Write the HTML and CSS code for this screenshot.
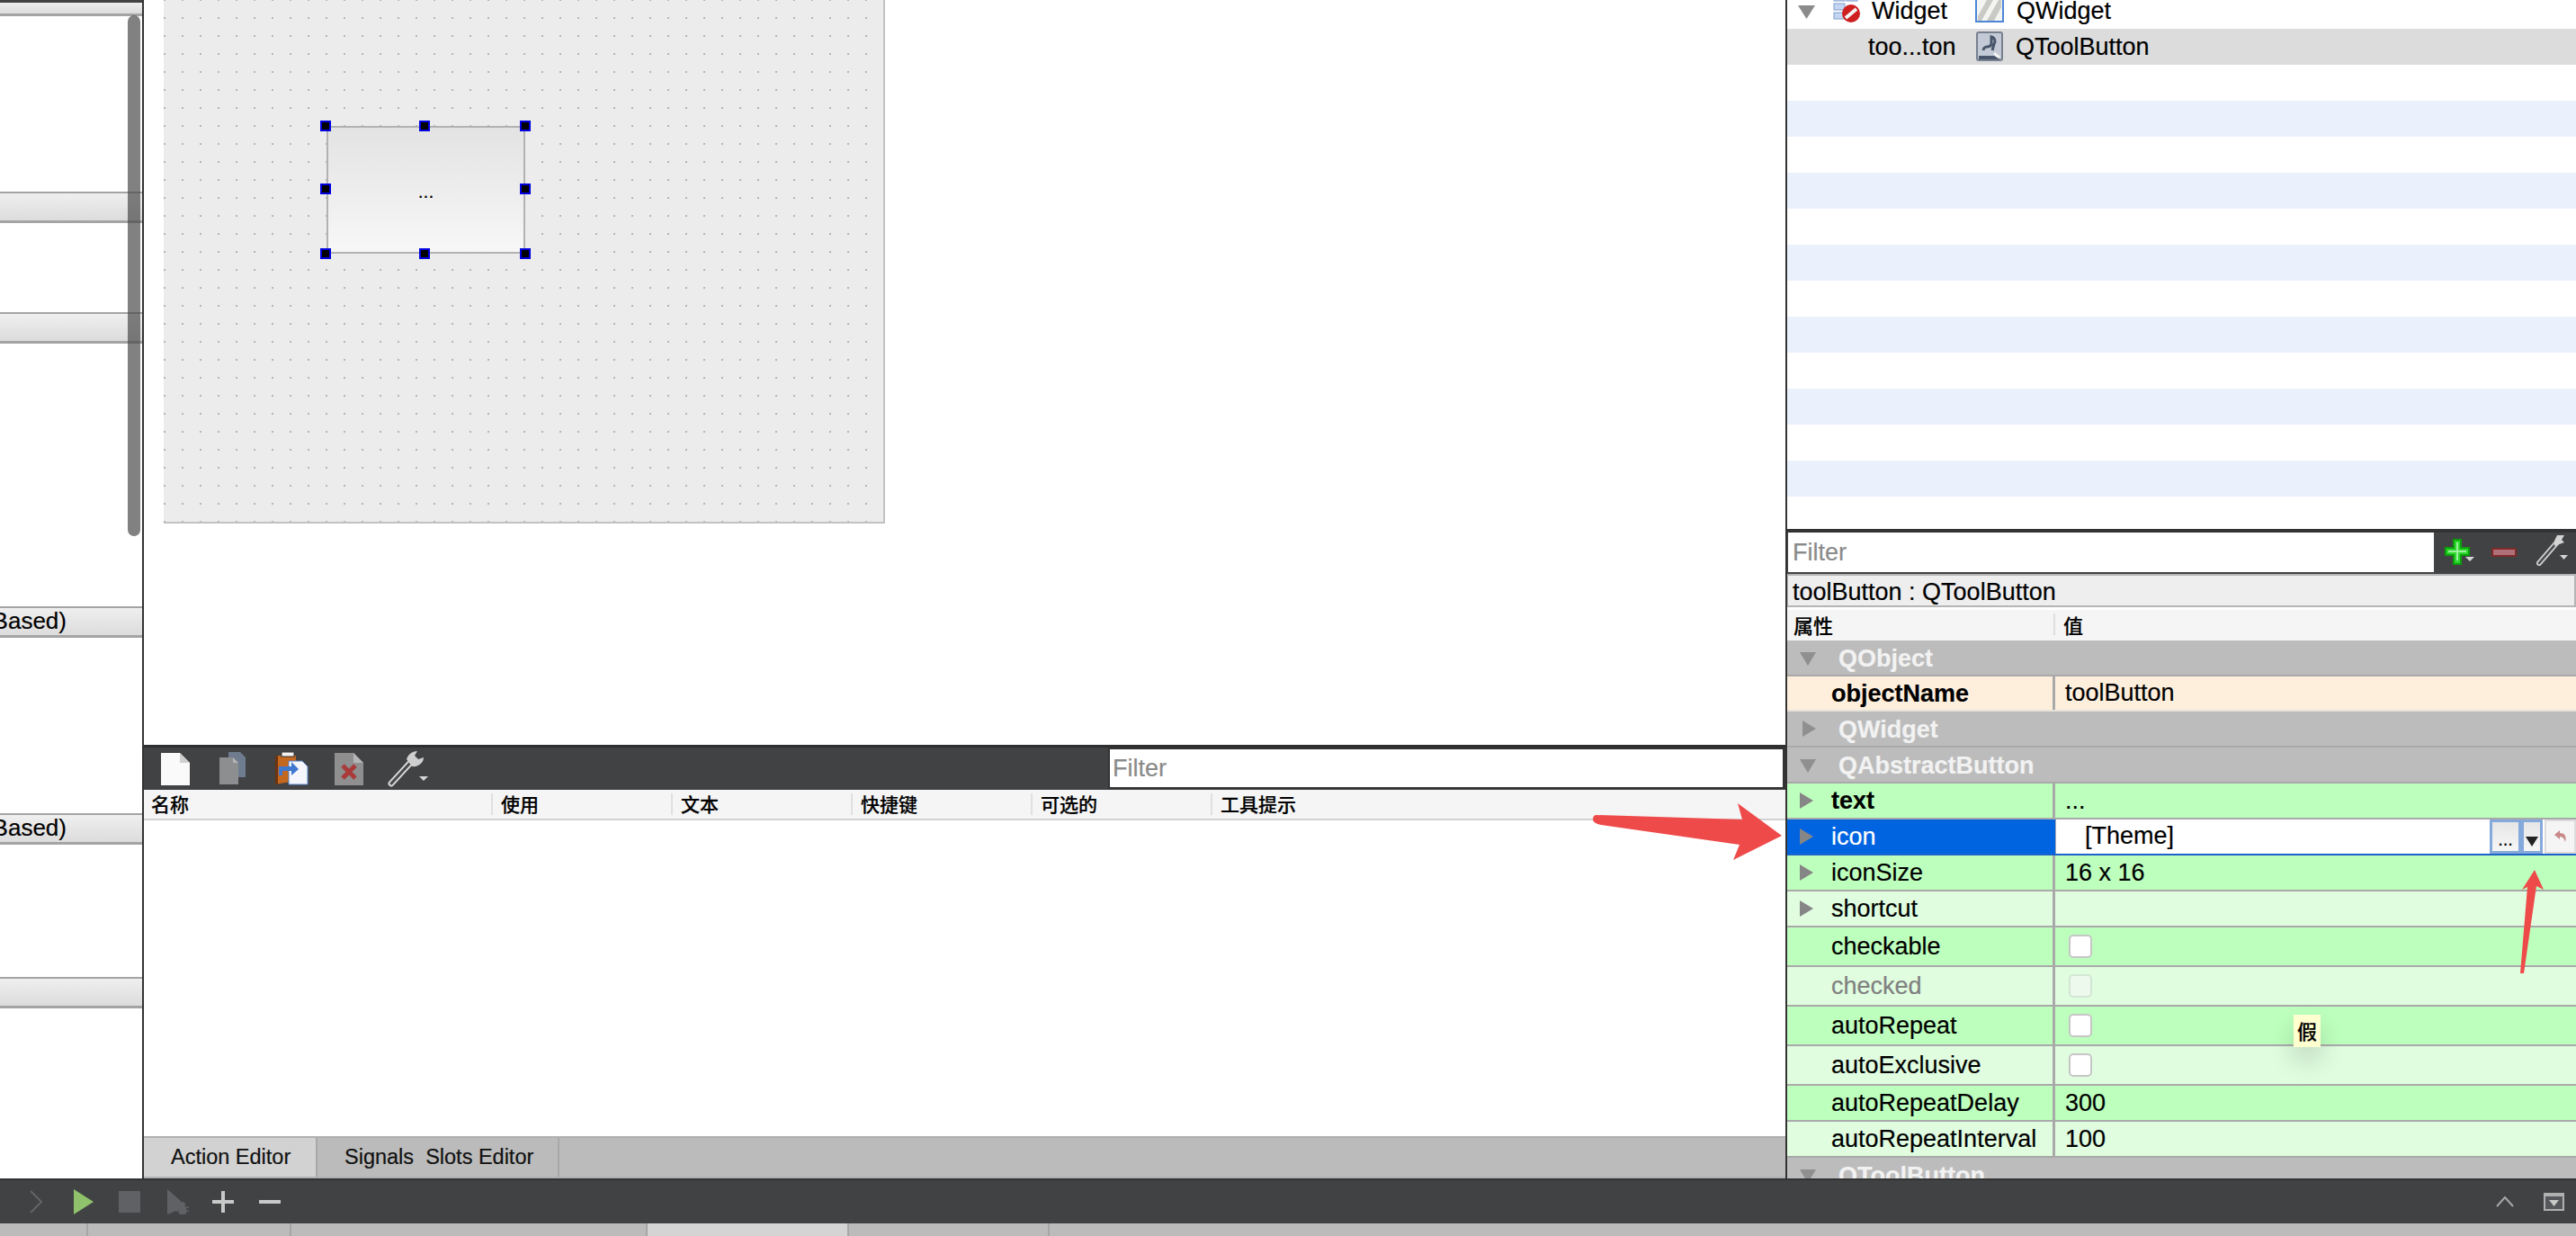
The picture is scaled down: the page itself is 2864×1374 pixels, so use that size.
FILE: index.html
```html
<!DOCTYPE html>
<html lang="en">

<head>
  <meta charset="UTF-8">
  <meta name="viewport" content="width=device-width, initial-scale=1.0">
  <title>Qt Designer</title>
  <link rel="stylesheet" href="styles.css">
</head>

<body>
  <div class="app">
    <div class="main">
      <!-- widget box, only the right end is visible -->
      <aside class="widget-box">
        <div class="box-head first"></div>
        <div class="box-body h-195"></div>
        <div class="box-head"></div>
        <div class="box-body h-99"></div>
        <div class="box-head"></div>
        <div class="box-body h-292"></div>
        <div class="box-head"><span class="clip">Based)</span></div>
        <div class="box-body h-195"></div>
        <div class="box-head"><span class="clip">Based)</span></div>
        <div class="box-body h-147"></div>
        <div class="box-head"></div>
        <div class="scroll-thumb"></div>
      </aside>

      <section class="center">
        <div class="canvas-area">
          <div class="form">
            <div class="tool-button">...</div>
            <i class="handle h-tl"></i><i class="handle h-tc"></i><i class="handle h-tr"></i>
            <i class="handle h-ml"></i><i class="handle h-mr"></i>
            <i class="handle h-bl"></i><i class="handle h-bc"></i><i class="handle h-br"></i>
          </div>
        </div>

        <div class="action-editor">
          <div class="dark-bar">
            <div class="bar-icons">
              <svg class="ic" width="32" height="36" viewBox="0 0 32 36">
                <path d="M0 0H21L32 11V36H0Z" fill="#fafafa" />
                <path d="M21 0L32 11H21Z" fill="#cfcfcf" />
              </svg>
              <svg class="ic" width="32" height="38" viewBox="0 0 32 38">
                <path d="M11 0H24L30 6V28H11Z" fill="#6f7c90" />
                <path d="M1 6H16L22 12V36H1Z" fill="#8d8e90" />
                <path d="M16 6L22 12H16Z" fill="#b4b4b4" />
              </svg>
              <svg class="ic" width="38" height="38" viewBox="0 0 38 38">
                <path d="M0 4H23V32L0 36Z" fill="#c4671f" />
                <path d="M0 4H3V36H0Z" fill="#6b3410" />
                <rect x="7" y="0" width="14" height="5" fill="#f2f2f2" stroke="#333" />
                <path d="M15 10H30L36 16V36H15Z" fill="#f4f6fb" stroke="#5a86cc" />
                <path d="M4 16H18V11L26 19L18 26V21H8V26H4Z" fill="#3f78cf" />
              </svg>
              <svg class="ic" width="32" height="36" viewBox="0 0 32 36">
                <path d="M0 0H21L32 11V36H0Z" fill="#8f8f8f" />
                <path d="M21 0L32 11H21Z" fill="#b5b5b5" />
                <path d="M9 14L23 28M23 14L9 28" stroke="#a83a3a" stroke-width="5" />
              </svg>
              <svg class="ic" width="46" height="40" viewBox="0 0 46 40">
                <path d="M4 36L26 12" stroke="#d8d8d8" stroke-width="7" stroke-linecap="round" />
                <path d="M4 36L26 12" stroke="#48494b" stroke-width="3" stroke-linecap="round" />
                <path d="M21 9C23 3 28 0 33 0L30 5L34 9L40 7C40 13 34 18 27 17Z" fill="#cfcfcf" />
                <path d="M35 28H45L40 33Z" fill="#d5d5d5" />
              </svg>
            </div>
            <div class="bar-filter">Filter</div>
          </div>
          <div class="action-head">
            <div class="col">名称</div>
            <div class="col">使用</div>
            <div class="col">文本</div>
            <div class="col">快捷键</div>
            <div class="col">可选的</div>
            <div class="col">工具提示</div>
          </div>
          <div class="action-body"></div>
          <div class="tabs">
            <div class="tab active">Action Editor</div>
            <div class="tab">Signals &nbsp;Slots Editor</div>
          </div>
        </div>
      </section>

      <section class="side">
        <div class="object-tree">
          <div class="obj-row top">
            <svg class="tree-arrow" width="19" height="15" viewBox="0 0 19 15"><path d="M0 0H19L9.500 15Z" fill="#8b8b8b" /></svg>
            <svg class="obj-icon w-icon" width="30" height="28" viewBox="0 0 30 28">
              <rect x="1" y="-4" width="12" height="7" fill="#c5d6f2" stroke="#7f9dcc" />
              <rect x="15" y="-4" width="12" height="7" fill="#c5d6f2" stroke="#7f9dcc" />
              <rect x="1" y="6" width="12" height="7" fill="#c5d6f2" stroke="#7f9dcc" />
              <rect x="1" y="16" width="12" height="7" fill="#c5d6f2" stroke="#7f9dcc" />
              <circle cx="20" cy="17" r="10" fill="#cf2020" />
              <path d="M14 22L26 12" stroke="#f4f4f4" stroke-width="4" />
            </svg>
            <span class="obj-name n-widget">Widget</span>
            <svg class="obj-icon" width="32" height="25" viewBox="0 0 32 25">
              <rect x="1" y="-2" width="30" height="26" fill="#f4f4f2" stroke="#4d86d8" stroke-width="2" />
              <path d="M3 18L13 0H20L7 23H3ZM13 23L26 0H29V8L21 23Z" fill="#c9c9c6" />
            </svg>
            <span>QWidget</span>
          </div>
          <div class="obj-row selected">
            <span class="obj-name n-tool">too...ton</span>
            <svg class="obj-icon" width="30" height="34" viewBox="0 0 30 34">
              <rect x="1" y="1" width="28" height="31" rx="2" fill="#c3cad5" stroke="#76808f" stroke-width="2" />
              <path d="M8 21C9 14 15 20 17 14L17 6C21 7 22 11 20 14L18 21" fill="none" stroke="#48556a" stroke-width="3" />
              <path d="M3 27H20L27 31H3Z" fill="#48556a" />
              <path d="M20 24L26 29" stroke="#f2f2f2" stroke-width="3" />
            </svg>
            <span>QToolButton</span>
          </div>
          <div class="obj-row"></div>
          <div class="obj-row alt"></div>
          <div class="obj-row"></div>
          <div class="obj-row alt"></div>
          <div class="obj-row"></div>
          <div class="obj-row alt"></div>
          <div class="obj-row"></div>
          <div class="obj-row alt"></div>
          <div class="obj-row"></div>
          <div class="obj-row alt"></div>
          <div class="obj-row"></div>
          <div class="obj-row alt"></div>
          <div class="obj-row last"></div>
        </div>

        <div class="prop-filter">
          <div class="filter-input">Filter</div>
          <div class="filter-icons">
            <svg width="34" height="30" viewBox="0 0 34 30">
              <path d="M10 1H18V10H27V18H18V28H10V18H1V10H10Z" fill="#2fd82f" stroke="#0aa00a" stroke-width="2" />
              <path d="M14 4V24M4 14H24" stroke="#9df09d" stroke-width="2" />
              <path d="M23 20H33L28 25Z" fill="#d5d5d5" />
            </svg>
            <svg width="28" height="10" viewBox="0 0 28 10">
              <rect x="1" y="1" width="26" height="8" fill="#b07078" stroke="#7e2a2a" stroke-width="2" />
            </svg>
            <svg class="filter-wrench" width="36" height="34" viewBox="0 0 36 34">
              <path d="M3 31L22 9" stroke="#cfcfcf" stroke-width="6" stroke-linecap="round" />
              <path d="M3 31L22 9" stroke="#48494b" stroke-width="2.500" stroke-linecap="round" />
              <path d="M20 6L23 0H31L28 5L31 8L20 12Z" fill="#d4d4d4" />
              <path d="M26 22H35L30.500 27Z" fill="#d5d5d5" />
            </svg>
          </div>
        </div>
        <div class="class-label">toolButton : QToolButton</div>
        <div class="prop-head">
          <div class="prop-head-name">属性</div>
          <div class="prop-head-value">值</div>
        </div>

        <div class="props">
          <div class="group"><i class="tri down"></i>QObject</div>
          <div class="prop cream">
            <div class="p-name bold">objectName</div>
            <div class="p-value">toolButton</div>
          </div>
          <div class="group"><i class="tri right"></i>QWidget</div>
          <div class="group"><i class="tri down"></i>QAbstractButton</div>
          <div class="prop green">
            <div class="p-name bold"><i class="tri right dark"></i>text</div>
            <div class="p-value">...</div>
          </div>
          <div class="prop current">
            <div class="p-name"><i class="tri right dark"></i>icon</div>
            <div class="p-value editor">
              <span class="theme">[Theme]</span>
              <span class="ed-btn b-more">...</span>
              <span class="ed-btn b-drop"><i class="drop-tri"></i></span>
              <span class="ed-reset">
                <svg width="14" height="14" viewBox="0 0 14 14">
                  <path d="M0 5L6 0V3C11 3 14 6 12 13C11 9 9 7 6 7V10Z" fill="#c98a8a" />
                </svg>
              </span>
            </div>
          </div>
          <div class="prop green">
            <div class="p-name"><i class="tri right dark"></i>iconSize</div>
            <div class="p-value">16 x 16</div>
          </div>
          <div class="prop pale">
            <div class="p-name"><i class="tri right dark"></i>shortcut</div>
            <div class="p-value"></div>
          </div>
          <div class="prop green tall">
            <div class="p-name">checkable</div>
            <div class="p-value"><i class="check"></i></div>
          </div>
          <div class="prop pale tall">
            <div class="p-name muted">checked</div>
            <div class="p-value"><i class="check off"></i></div>
          </div>
          <div class="prop green tall">
            <div class="p-name">autoRepeat</div>
            <div class="p-value"><i class="check"></i></div>
          </div>
          <div class="prop pale tall">
            <div class="p-name">autoExclusive</div>
            <div class="p-value"><i class="check"></i></div>
          </div>
          <div class="prop green">
            <div class="p-name">autoRepeatDelay</div>
            <div class="p-value">300</div>
          </div>
          <div class="prop pale">
            <div class="p-name">autoRepeatInterval</div>
            <div class="p-value">100</div>
          </div>
          <div class="group"><i class="tri down"></i>QToolButton</div>
          <div class="tooltip">假</div>
        </div>
      </section>
    </div>

    <div class="run-bar">
      <div class="run-icons">
        <svg width="14" height="26" viewBox="0 0 14 26"><path d="M1 1L13 13L1 25" fill="none" stroke="#626467" stroke-width="2" /></svg>
        <svg width="22" height="28" viewBox="0 0 22 28"><path d="M0 0L22 14L0 28Z" fill="#8fc26b" /></svg>
        <div class="stop"></div>
        <svg width="24" height="28" viewBox="0 0 24 28">
          <path d="M0 0L15 13V22L0 28Z" fill="#606165" />
          <circle cx="17" cy="17" r="3" fill="#606165" />
          <rect x="13" y="19" width="8" height="9" rx="2" fill="#606165" />
          <path d="M10 20H24M10 24H24" stroke="#606165" stroke-width="1.500" />
        </svg>
        <svg width="24" height="24" viewBox="0 0 24 24"><path d="M10 0H14V10H24V14H14V24H10V14H0V10H10Z" fill="#c9c9c9" /></svg>
        <svg width="24" height="4" viewBox="0 0 24 4"><rect width="24" height="4" fill="#c9c9c9" /></svg>
      </div>
      <div class="run-right">
        <svg width="20" height="12" viewBox="0 0 20 12"><path d="M1 11L10 1L19 11" fill="none" stroke="#a8a8a8" stroke-width="2" /></svg>
        <svg width="23" height="20" viewBox="0 0 23 20">
          <rect x="1" y="1" width="21" height="18" fill="#55575a" stroke="#b0b0b0" stroke-width="2" />
          <rect x="0" y="0" width="23" height="4" fill="#b0b0b0" />
          <path d="M6 8H17L11.500 15Z" fill="#c9c9c9" />
        </svg>
      </div>
    </div>

    <div class="status-tabs">
      <div class="st w-97"></div>
      <div class="st w-226"></div>
      <div class="st w-396"></div>
      <div class="st w-224 on"></div>
      <div class="st w-223"></div>
      <div class="st"></div>
    </div>
  </div>

  <!-- red marks drawn on top of the screenshot -->
  <svg class="marks" width="2864" height="1374" viewBox="0 0 2864 1374">
    <path d="M1775 906L1937 911L1932 893L1981 929L1927 956L1934 939L1780 917Q1771 915 1771 911Q1771 906 1775 906Z" fill="#ef4a4a" />
    <path d="M2818 967L2828 989L2820 985L2806 1082L2802 1082L2810 986L2804 989Z" fill="#ef4a4a" />
  </svg>
</body>

</html>
```

FILE: styles.css
```css
* {
  margin: 0;
  padding: 0;
  box-sizing: border-box;
}

html {
  height: 1374px;
  overflow: hidden;
}

body {
  width: 2864px;
  height: 1374px;
  overflow: hidden;
  position: relative;
  background: #fff;
  font-family: 'Liberation Sans', 'Noto Sans CJK SC', sans-serif;
  font-size: 27px;
  color: #000;
  -webkit-text-stroke: 0.2px currentColor;
}

.app {
  width: 2864px;
  height: 1374px;
  display: flex;
  flex-direction: column;
}

.main {
  height: 1310px;
  display: flex;
}

/* left panel */
.widget-box {
  width: 160px;
  position: relative;
  border-right: 2px solid #333;
  overflow: hidden;
}

.box-head {
  height: 35px;
  background: linear-gradient(#efefef, #dcdcdc);
  border-top: 2px solid #a4a4a4;
  border-bottom: 3px solid #a4a4a4;
  overflow: hidden;
  position: relative;
}

.box-head.first {
  height: 18px;
  border-top: 3px solid #444;
}

.box-body {
  background: #fff;
}

.h-195 {
  height: 195px;
}

.h-99 {
  height: 99px;
}

.h-292 {
  height: 292px;
}

.h-147 {
  height: 147px;
}

.clip {
  position: absolute;
  right: 84px;
  top: 1px;
  line-height: 26px;
  font-size: 26px;
}

.scroll-thumb {
  position: absolute;
  left: 142px;
  top: 17px;
  width: 14px;
  height: 579px;
  border-radius: 7px;
  background: rgba(70, 70, 70, 0.68);
}

/* middle */
.center {
  width: 1825px;
  display: flex;
  flex-direction: column;
}

.canvas-area {
  height: 828px;
  padding-left: 22px;
}

.form {
  width: 802px;
  height: 582px;
  position: relative;
  background-color: #ececec;
  background-image: radial-gradient(circle at 1px 1px, #b6b6b6 0.8px, transparent 1.1px);
  background-size: 20px 20px;
  background-position: 0 19px;
  border-right: 2px solid #c2c2c2;
  border-bottom: 2px solid #c2c2c2;
}

.tool-button {
  position: absolute;
  left: 181px;
  top: 140px;
  width: 221px;
  height: 142px;
  border: 2px solid #b2b2b2;
  background: linear-gradient(#e3e3e3, #f7f7f7);
  display: flex;
  align-items: center;
  justify-content: center;
  font-size: 21px;
  padding-top: 3px;
}

.handle {
  position: absolute;
  width: 12px;
  height: 12px;
  background: #000;
  border: 2px solid #0000e0;
}

.h-tl {
  left: 174px;
  top: 134px;
}

.h-tc {
  left: 284px;
  top: 134px;
}

.h-tr {
  left: 396px;
  top: 134px;
}

.h-ml {
  left: 174px;
  top: 204px;
}

.h-mr {
  left: 396px;
  top: 204px;
}

.h-bl {
  left: 174px;
  top: 276px;
}

.h-bc {
  left: 284px;
  top: 276px;
}

.h-br {
  left: 396px;
  top: 276px;
}

.action-editor {
  flex: 1;
  display: flex;
  flex-direction: column;
}

.dark-bar {
  height: 50px;
  background: #414244;
  border-top: 3px solid #2f2f30;
  display: flex;
  justify-content: space-between;
}

.bar-icons {
  display: flex;
  align-items: center;
  padding-left: 19px;
}

.bar-icons .ic:nth-child(2) {
  margin-left: 32px;
}

.bar-icons .ic:nth-child(3) {
  margin-left: 31px;
}

.bar-icons .ic:nth-child(4) {
  margin-left: 28px;
}

.bar-icons .ic:nth-child(5) {
  margin-left: 27px;
}

.bar-filter {
  width: 753px;
  height: 46px;
  background: #fff;
  border: 2px solid #333;
  border-right-width: 3px;
  color: #8a8a8a;
  padding-left: 3px;
  line-height: 42px;
}

.action-head {
  height: 34px;
  display: flex;
  background: #f5f5f5;
  border-bottom: 2px solid #d2d2d2;
  font-family: 'Noto Sans CJK SC', sans-serif;
  font-size: 21px;
  font-weight: 500;
  line-height: 30px;
}

.col {
  width: 200px;
  padding-left: 10px;
  position: relative;
}

.col:first-child {
  width: 387px;
  padding-left: 8px;
}

.col:last-child {
  width: auto;
  flex: 1;
}

.col + .col::before {
  content: '';
  position: absolute;
  left: -1px;
  top: 4px;
  bottom: 4px;
  width: 2px;
  background: #e0e0e0;
}

.action-body {
  flex: 1;
  background: #fff;
}

.tabs {
  height: 47px;
  display: flex;
  background: #bbb;
  border-top: 2px solid #b0b0b0;
  border-bottom: 2px solid #b0b0b0;
  font-size: 23.500px;
  color: #111;
}

.tab {
  padding: 0 30px;
  line-height: 43px;
  border-right: 2px solid #a8a8a8;
  white-space: nowrap;
}

.tab.active {
  width: 193px;
  background: #d2d2d2;
}

.tab:last-child {
  width: 269px;
  padding-left: 30px;
}

/* right side */
.side {
  flex: 1;
  position: relative;
  border-left: 2px solid #333;
  display: flex;
  flex-direction: column;
  min-width: 0;
}

.object-tree {
  height: 588px;
  overflow: hidden;
}

.obj-row {
  height: 40px;
  display: flex;
  align-items: center;
}

.obj-row.top {
  height: 32px;
  padding-left: 12px;
}

.obj-row.selected {
  background: #dcdcdc;
}

.obj-row.alt {
  background: #eaf1fc;
}

.obj-row.last {
  height: 36px;
}

.tree-arrow {
  margin-right: 20px;
  margin-top: -6px;
}

.w-icon {
  margin-right: 13px;
  margin-top: -4px;
}

.obj-row.top .obj-name,
.obj-row.top span {
  margin-top: -8px;
}

.obj-row.top .obj-icon {
  margin-top: -8px;
}

.obj-name {
  display: block;
}

.n-widget {
  width: 115px;
}

.n-tool {
  width: 120px;
  margin-left: 90px;
}

.obj-icon {
  flex-shrink: 0;
}

.obj-row .obj-icon + span {
  margin-left: 14px;
}

.obj-row.top .w-icon + span {
  margin-left: 0;
}

.prop-filter {
  height: 50px;
  background: #414244;
  border-top: 4px solid #333;
  border-bottom: 2px solid #414244;
  display: flex;
}

.filter-input {
  width: 718px;
  margin-left: 1px;
  background: #fff;
  color: #8a8a8a;
  padding-left: 5px;
  line-height: 44px;
}

.filter-icons {
  flex: 1;
  display: flex;
  align-items: center;
  padding-left: 12px;
  gap: 18px;
}

.filter-wrench {
  margin-left: 4px;
  margin-top: -4px;
}

.class-label {
  height: 37px;
  background: #eee;
  border: 2px solid #b5b5b5;
  border-left-width: 1px;
  padding-left: 5px;
  line-height: 36px;
  white-space: nowrap;
}

.prop-head {
  height: 34px;
  margin-top: 3px;
  display: flex;
  background: #f5f5f5;
  font-family: 'Noto Sans CJK SC', sans-serif;
  font-size: 22px;
  font-weight: 500;
  line-height: 32px;
}

.prop-head-name {
  width: 298px;
  padding-left: 7px;
  position: relative;
}

.prop-head-name::after {
  content: '';
  position: absolute;
  right: 0;
  top: 4px;
  bottom: 6px;
  width: 2px;
  background: #dedede;
}

.prop-head-value {
  padding-left: 9px;
}

.props {
  position: relative;
  flex: 1;
  overflow: hidden;
}

.group {
  height: 40px;
  background: #bcbcbc;
  border-bottom: 2px solid #a9a9a9;
  color: #f2f2f2;
  font-weight: bold;
  line-height: 40px;
  padding-left: 57px;
  position: relative;
}

.tri {
  position: absolute;
  width: 0;
  height: 0;
  top: 12px;
  -webkit-text-stroke: 0;
}

.tri.down {
  left: 14px;
  top: 13px;
  border-left: 9px solid transparent;
  border-right: 9px solid transparent;
  border-top: 15px solid #8f8f8f;
}

.tri.right {
  left: 17px;
  top: 10px;
  border-top: 9px solid transparent;
  border-bottom: 9px solid transparent;
  border-left: 15px solid #8f8f8f;
}

.tri.dark {
  left: 14px;
  top: 10px;
  border-left-color: #868686;
}

.prop {
  height: 40px;
  display: flex;
  border-bottom: 2px solid #a9a9a9;
  line-height: 39px;
}

.prop.cream {
  height: 39px;
}

.prop.tall {
  height: 44px;
  line-height: 42px;
}

.green {
  background: #bdffbd;
}

.pale {
  background: #e0fde0;
}

.cream {
  background: #feefdd;
  border-bottom-color: #e6e2d8;
}

.p-name {
  width: 298px;
  flex-shrink: 0;
  padding-left: 49px;
  position: relative;
  border-right: 3px solid #a9a9a9;
}

.bold {
  font-weight: bold;
}

.muted {
  color: #808080;
}

.p-value {
  flex: 1;
  padding-left: 11px;
  display: flex;
  align-items: center;
}

.current {
  border-bottom: 2px solid #1c62c8;
}

.current .p-name {
  background: #0064e1;
  color: #fff;
  border-right-color: #0064e1;
}

.current .p-value {
  background: #fff;
  border-left: 1px solid #a9a9a9;
  padding-left: 32px;
}

.editor {
  position: relative;
}

.theme {
  flex: 1;
  margin-top: -2px;
}

.ed-btn {
  height: 38px;
  margin-top: -1px;
  border: 3px solid #85a9da;
  background: linear-gradient(#e6e6e6, #f6f6f6);
  display: flex;
  align-items: flex-end;
  justify-content: center;
  font-size: 20px;
  line-height: 26px;
}

.b-more {
  width: 35px;
}

.b-drop {
  width: 24px;
  align-items: center;
}

.drop-tri {
  width: 0;
  height: 0;
  margin-top: 12px;
  border-left: 7px solid transparent;
  border-right: 7px solid transparent;
  border-top: 11px solid #222;
}

.ed-reset {
  width: 35px;
  height: 38px;
  margin-top: -1px;
  margin-left: 2px;
  background: #f5f5f5;
  border: 2px solid #dcdcdc;
  display: flex;
  align-items: center;
  justify-content: center;
}

.check {
  display: block;
  width: 26px;
  height: 26px;
  margin-left: 4px;
  background: #fff;
  border: 2px solid #c6c6c6;
  border-radius: 5px;
}

.check.off {
  background: #eef9ee;
  border-color: #d3e6d3;
}

.tooltip {
  position: absolute;
  left: 563px;
  top: 416px;
  width: 30px;
  height: 36px;
  background: #ffffcf;
  font-family: 'Noto Sans CJK SC', sans-serif;
  font-size: 22px;
  font-weight: 500;
  line-height: 34px;
  text-align: center;
  box-shadow: 0 14px 28px rgba(0, 0, 0, 0.16);
}

/* bottom */
.run-bar {
  height: 50px;
  background: #414244;
  border-top: 2px solid #333;
  display: flex;
  justify-content: space-between;
  align-items: center;
}

.run-icons {
  display: flex;
  align-items: center;
  padding-left: 33px;
}

.run-icons svg:nth-child(1) {
  margin-right: 35px;
}

.run-icons svg:nth-child(2) {
  margin-right: 28px;
}

.stop {
  width: 24px;
  height: 24px;
  background: #606165;
  margin-right: 30px;
}

.run-icons svg:nth-child(4) {
  margin-right: 26px;
}

.run-icons svg:nth-child(5) {
  margin-right: 28px;
}

.run-right {
  display: flex;
  align-items: center;
  gap: 33px;
  padding-right: 13px;
}

.status-tabs {
  flex: 1;
  display: flex;
  background: #bbb;
}

.st {
  border-right: 2px solid #a6a6a6;
}

.st:last-child {
  flex: 1;
  border-right: 0;
}

.st.on {
  background: #d4d4d4;
}

.w-97 {
  width: 98px;
}

.w-226 {
  width: 226px;
}

.w-396 {
  width: 396px;
}

.w-224 {
  width: 224px;
}

.w-223 {
  width: 223px;
}

.marks {
  position: absolute;
  left: 0;
  top: 0;
  pointer-events: none;
}
```
